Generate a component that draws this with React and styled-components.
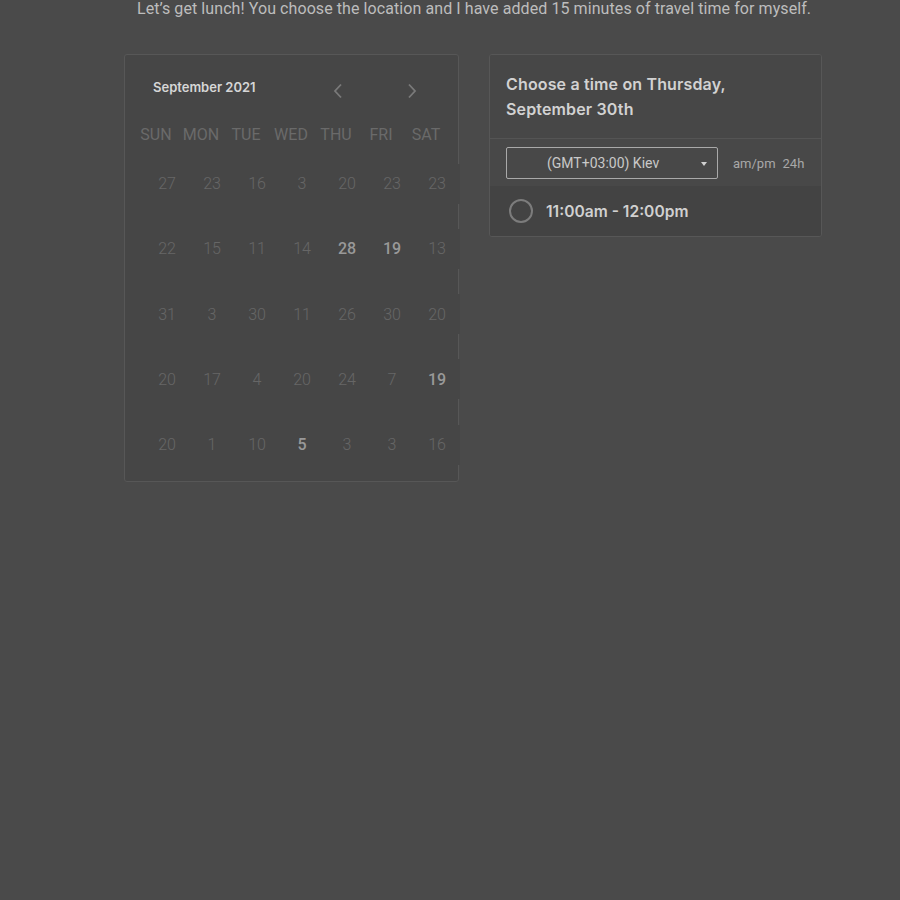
import React from "react";
import styled, { createGlobalStyle } from "styled-components";

const Global = createGlobalStyle`
  html, body { margin: 0; padding: 0; background: #4a4a4a; }
  body { font-family: Roboto, "Liberation Sans", sans-serif; }
  * { box-sizing: border-box; }
`;

const Page = styled.div`
  width: 900px;
  height: 900px;
  overflow: hidden;
  background: #4a4a4a;
`;

const Intro = styled.p`
  margin: -1px 0 0 0;
  padding-left: 137px;
  font-family: Roboto, sans-serif;
  font-size: 16px;
  line-height: 19px;
  letter-spacing: 0.08px;
  color: #bdbdbd;
  white-space: nowrap;
`;

const Row = styled.div`
  display: flex;
  align-items: flex-start;
  gap: 30px;
  margin-top: 36px;
  padding-left: 124px;
`;

const Card = styled.div`
  flex-shrink: 0;
  width: ${(p) => p.$w}px;
  background: #464646;
  border: 1px solid #575757;
  border-radius: 3px;
`;

const CalCard = styled(Card)`
  height: 428px;
  padding-top: 17px;
`;

const MonthBar = styled.div`
  display: flex;
  align-items: center;
  height: 30px;
  padding-left: 28px;
`;

const MonthLabel = styled.div`
  flex-shrink: 0;
  font-family: Inter, "Liberation Sans", sans-serif;
  font-weight: 600;
  font-size: 13px;
  color: #d6d6d6;
  width: 180px;
`;

const NavBtn = styled.span`
  flex-shrink: 0;
  width: 74px;
  height: 30px;
  margin-top: 8px;
  display: flex;
  align-items: center;
`;

const WeekRow = styled.div`
  display: grid;
  grid-template-columns: repeat(7, 45px);
  margin-top: 22px;
  padding-left: 8.5px;
  height: 20px;
  align-items: center;
`;

const WeekDay = styled.div`
  text-align: center;
  font-size: 16px;
  color: #6a6a6a;
`;

const DateGrid = styled.div`
  display: grid;
  grid-template-columns: repeat(7, 45px);
  grid-auto-rows: 40px;
  row-gap: 25.25px;
  margin-top: 19.5px;
  margin-left: 19.5px;
  width: 315px;
`;

const DateCell = styled.div`
  display: flex;
  align-items: center;
  justify-content: center;
  background: #464646;
  font-size: 16px;
  font-weight: ${(p) => (p.$on ? 500 : 300)};
  color: ${(p) => (p.$on ? "#999999" : "#666666")};
`;

const TimeCard = styled(Card)`
  overflow: hidden;
`;

const TimeHead = styled.div`
  padding: 17px 16px 16px 16px;
  border-bottom: 1px solid #545454;
  background: #474747;
`;

const TimeTitle = styled.div`
  font-family: Inter, "Liberation Sans", sans-serif;
  font-weight: 600;
  font-size: 16px;
  line-height: 25px;
  letter-spacing: 0.15px;
  color: #d2d2d2;
`;

const ZoneRow = styled.div`
  display: flex;
  align-items: center;
  padding: 8px 16px 7px 16px;
  background: #484848;
`;

const Select = styled.div`
  position: relative;
  width: 212px;
  height: 32px;
  border: 1px solid #a9a9a9;
  border-radius: 2px;
  display: flex;
  align-items: center;
  padding-left: 40px;
  font-size: 14px;
  color: #c9c9c9;
`;

const Caret = styled.span`
  position: absolute;
  right: 10px;
  top: 14px;
  width: 0;
  height: 0;
  border-left: 3.5px solid transparent;
  border-right: 3.5px solid transparent;
  border-top: 4px solid #d0d0d0;
`;

const Toggles = styled.div`
  display: flex;
  gap: 7px;
  margin-left: 15px;
  font-size: 13px;
  color: #a8a8a8;
`;

const Slot = styled.div`
  display: flex;
  align-items: center;
  gap: 13px;
  height: 50px;
  padding-left: 19px;
  background: #434343;
`;

const Radio = styled.span`
  width: 24px;
  height: 24px;
  border-radius: 50%;
  border: 2px solid #7c7c7c;
`;

const SlotText = styled.div`
  font-family: Inter, "Liberation Sans", sans-serif;
  font-weight: 600;
  font-size: 15.6px;
  color: #d0d0d0;
`;

const Chevron = ({ dir }) => (
  <svg width="10" height="16" viewBox="0 0 10 16">
    <path
      d={dir === "left" ? "M8 1.5 L2 8 L8 14.5" : "M2 1.5 L8 8 L2 14.5"}
      fill="none"
      stroke="#7a7a7a"
      strokeWidth="1.8"
    />
  </svg>
);

const days = ["SUN", "MON", "TUE", "WED", "THU", "FRI", "SAT"];
const dates = [
  ["27", "23", "16", "3", "20", "23", "23"],
  ["22", "15", "11", "14", "28*", "19*", "13"],
  ["31", "3", "30", "11", "26", "30", "20"],
  ["20", "17", "4", "20", "24", "7", "19*"],
  ["20", "1", "10", "5*", "3", "3", "16"],
];

export default function App() {
  return (
    <Page>
      <Global />
      <Intro>
        Let’s get lunch! You choose the location and I have added 15 minutes of travel time for myself.
      </Intro>
      <Row>
        <CalCard $w={335}>
          <MonthBar>
            <MonthLabel>September 2021</MonthLabel>
            <NavBtn><Chevron dir="left" /></NavBtn>
            <NavBtn><Chevron dir="right" /></NavBtn>
          </MonthBar>
          <WeekRow>
            {days.map((d) => (
              <WeekDay key={d}>{d}</WeekDay>
            ))}
          </WeekRow>
          <DateGrid>
            {dates.flat().map((d, i) => (
              <DateCell key={i} $on={d.endsWith("*")}>
                {d.replace("*", "")}
              </DateCell>
            ))}
          </DateGrid>
        </CalCard>
        <TimeCard $w={333}>
          <TimeHead>
            <TimeTitle>
              Choose a time on Thursday,
              <br />
              September 30th
            </TimeTitle>
          </TimeHead>
          <ZoneRow>
            <Select>
              (GMT+03:00) Kiev
              <Caret />
            </Select>
            <Toggles>
              <span>am/pm</span>
              <span>24h</span>
            </Toggles>
          </ZoneRow>
          <Slot>
            <Radio />
            <SlotText>11:00am - 12:00pm</SlotText>
          </Slot>
        </TimeCard>
      </Row>
    </Page>
  );
}
